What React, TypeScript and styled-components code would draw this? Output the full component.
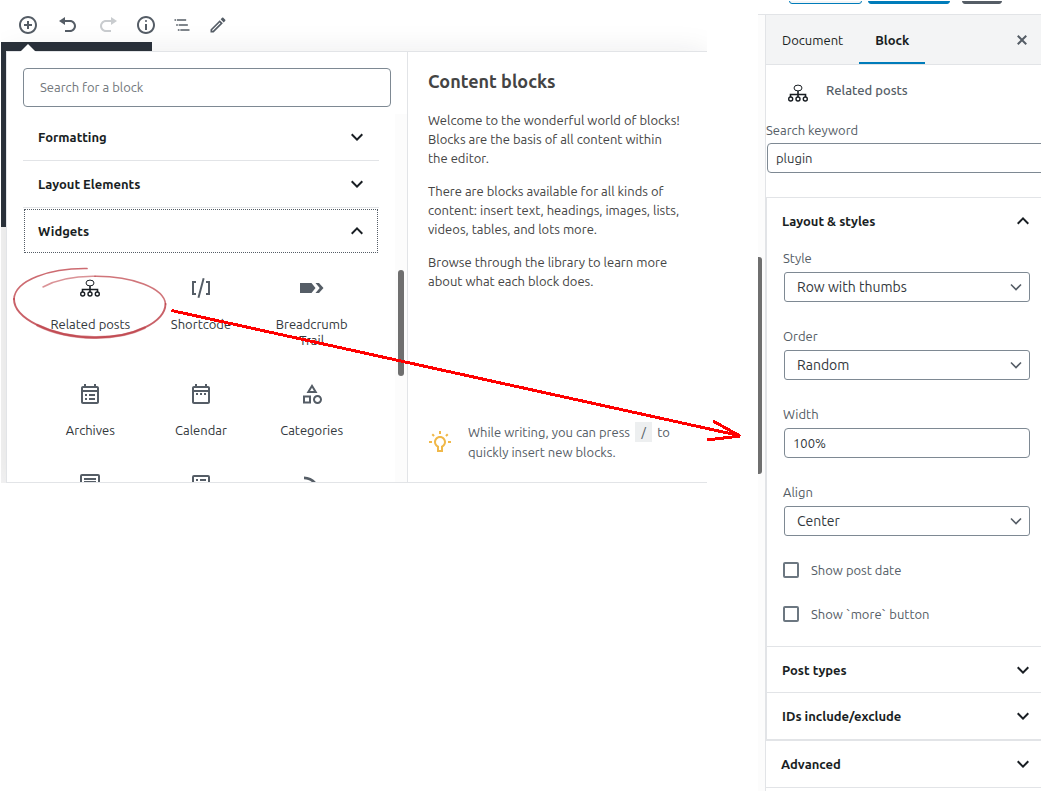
import React, { useState } from 'react';
import styled, { createGlobalStyle } from 'styled-components';

const GlobalStyle = createGlobalStyle`
  *, *::before, *::after { box-sizing: border-box; }
  body {
    margin: 0;
    background: #fff;
    color: #191e23;
    font-family: Ubuntu, "Noto Sans", "Open Sans", sans-serif;
    font-size: 13px;
    line-height: 20px;
  }
  button, input, select { font: inherit; color: inherit; margin: 0; }
  h2, p, ul { margin: 0; padding: 0; }
`;

const line = '#e2e4e7';
const slate = '#555d66';
const fieldBorder = '#7e8993';

const Page = styled.div`
  position: relative;
  display: flex;
  align-items: flex-start;
  gap: 51px;
  padding: 0 5px 0 1px;
`;

const Editor = styled.section`
  flex: 1;
  min-width: 0;
  overflow: hidden;
`;

const Toolbar = styled.div`
  display: flex;
  align-items: center;
  height: 42px;
  padding: 8px 0 0 17px;
`;

const ToolButton = styled.button<{ $gap: number }>`
  display: flex;
  width: 20px;
  height: 20px;
  margin-right: ${(p) => p.$gap}px;
  padding: 0;
  border: 0;
  background: none;
  color: ${slate};
  &:disabled { color: #c9cccf; }
`;

const Canvas = styled.div`
  display: grid;
  background: #f6f6f6;
`;

const AdminMenu = styled.div`
  grid-area: 1 / 1;
  width: 151px;
  height: 185px;
  background: #2b323b;
`;

const Backdrop = styled.div`
  grid-area: 1 / 1;
  background: #fff;
  margin-left: 5px;
`;

const Inserter = styled.div`
  grid-area: 1 / 1;
  position: relative;
  display: flex;
  height: 432px;
  margin: 9px 0 0 5px;
  background: #fff;
  border: 1px solid ${line};
  border-right: 0;
  box-shadow: 0 3px 30px rgba(25, 30, 35, 0.1);
`;

const Pointer = styled.svg`
  position: absolute;
  top: -9px;
  left: 12px;
`;

const BlockPicker = styled.div`
  flex: 0 0 401px;
  display: flex;
  flex-direction: column;
  border-right: 1px solid ${line};
`;

const SearchInput = styled.input`
  height: 39px;
  margin: 16px 16px 7px;
  padding: 0 16px 2px;
  border: 1px solid ${fieldBorder};
  border-radius: 4px;
  background: #fff;
  &::placeholder { color: #72777c; opacity: 1; }
`;

const ScrollArea = styled.div`
  flex: 1;
  min-height: 0;
  display: flex;
  overflow: hidden;
`;

const Categories = styled.div`
  flex: 1;
  min-width: 0;
  padding: 0 16px;
`;

const CategoryButton = styled.button<{ $open?: boolean }>`
  display: flex;
  align-items: center;
  justify-content: space-between;
  width: 100%;
  height: ${(p) => (p.$open ? 46 : 47)}px;
  padding: 0 10px 0 15px;
  border: 0;
  border-bottom: ${(p) => (p.$open ? 0 : 1)}px solid ${line};
  background: none;
  font-weight: 600;
  outline: ${(p) => (p.$open ? '1px dotted #555d66' : 'none')};
  outline-offset: -2px;
`;

const BlockGrid = styled.ul`
  display: grid;
  grid-template-columns: repeat(3, 1fr);
  width: 332px;
  margin-left: 12px;
  list-style: none;
`;

const BlockButton = styled.button`
  display: flex;
  flex-direction: column;
  align-items: center;
  gap: 16px;
  width: 100%;
  padding: 22px 12px 12px;
  border: 0;
  background: none;
  color: #32373c;
  line-height: 16px;
  svg { color: ${slate}; }
`;

const Track = styled.div`
  width: 12px;
  padding: 156px 3px 0 3px;
  background: #fcfcfc;
`;

const Thumb = styled.div<{ $height: number }>`
  height: ${(p) => p.$height}px;
  border-radius: 3px;
  background: #6f6f6f;
`;

const Help = styled.div`
  flex: 1;
  min-width: 0;
  display: flex;
  flex-direction: column;
  padding: 17px 0 20px 20px;
  color: #444;
  line-height: 19px;
  white-space: nowrap;
`;

const HelpTitle = styled.h2`
  margin-bottom: 18px;
  font-size: 18px;
  line-height: 24px;
`;

const HelpText = styled.p`
  margin-bottom: 14px;
`;

const Tip = styled.div`
  display: flex;
  align-items: center;
  gap: 16px;
  margin-top: auto;
  color: ${slate};
  line-height: 20px;
  svg { color: #f0b849; }
`;

const Key = styled.code`
  margin: 0 2px;
  padding: 3px 5px;
  background: #edeff0;
  font-family: "Ubuntu Mono", "Liberation Mono", monospace;
  font-size: 13px;
`;

const Sidebar = styled.aside`
  flex: 0 0 283px;
  margin-top: 1px;
  overflow: hidden;
`;

const TopActions = styled.div`
  display: flex;
  align-items: flex-end;
  height: 14px;
  padding: 0 39px 10px 31px;
  border-bottom: 1px solid ${line};
  overflow: hidden;
`;

const ActionButton = styled.button<{ $width: number; $gap: number; $bg: string; $border: string }>`
  flex: 0 0 ${(p) => p.$width}px;
  height: 33px;
  margin-right: ${(p) => p.$gap}px;
  border: 1px solid ${(p) => p.$border};
  border-radius: 3px;
  background: ${(p) => p.$bg};
`;

const SidebarBody = styled.div`
  display: flex;
`;

const OuterTrack = styled.div`
  width: 7px;
  padding: 242px 3px 0 0;
  background: #fcfcfc;
`;

const OuterThumb = styled(Thumb)`
  border-radius: 0 3px 3px 0;
`;

const Settings = styled.div`
  flex: 1;
  min-width: 0;
  padding-bottom: 3px;
  border-left: 1px solid ${line};
`;

const Tabs = styled.div`
  display: flex;
  height: 50px;
  border-bottom: 1px solid ${line};
  background: #f3f4f5;
`;

const Tab = styled.button<{ $active?: boolean }>`
  padding: 0 16px;
  border: 0;
  border-bottom: 2px solid ${(p) => (p.$active ? '#007cba' : 'transparent')};
  border-top: 2px solid transparent;
  background: none;
  font-weight: ${(p) => (p.$active ? 600 : 400)};
`;

const CloseButton = styled.button`
  display: flex;
  align-items: center;
  margin-left: auto;
  padding: 0 9px;
  border: 0;
  background: none;
  color: ${slate};
`;

const BlockCard = styled.div`
  display: flex;
  gap: 16px;
  padding: 15px 0 0 20px;
  height: 55px;
  color: ${slate};
  font-weight: 500;
  svg { margin-top: 1px; }
`;

const KeywordField = styled.label`
  display: block;
  padding-bottom: 24px;
  color: ${slate};
`;

const TextInput = styled.input`
  display: block;
  height: 30px;
  margin-left: 1px;
  padding: 0 8px;
  border: 1px solid ${fieldBorder};
  border-radius: 4px;
  background: #fff;
  color: #32373c;
`;

const KeywordInput = styled(TextInput)`
  width: calc(100% + 8px);
  margin-top: 3px;
`;

const PanelGroup = styled.div`
  border: 1px solid ${line};
  border-right: 0;
`;

const PanelButton = styled.button`
  display: flex;
  align-items: center;
  justify-content: space-between;
  width: 100%;
  height: 46px;
  padding: 0 6px 0 15px;
  border: 0;
  background: none;
  font-weight: 600;
`;

const Panel = styled.div`
  & + & { border-top: 1px solid ${line}; }
  & + & ${PanelButton} { height: 45px; }
  & + &:last-child ${PanelButton} { height: 46px; }
`;

const AdvancedPanel = styled.div`
  border-top: 1px solid ${line};
  border-bottom: 1px solid ${line};
`;

const Fields = styled.div`
  display: flex;
  flex-direction: column;
  gap: 24px;
  padding: 4px 11px 22px 16px;
`;

const Field = styled.label`
  display: grid;
  gap: 4px;
  color: ${slate};
`;

const SelectBox = styled.span`
  display: grid;
  align-items: center;
  margin-left: 1px;
  svg {
    grid-area: 1 / 1;
    justify-self: end;
    margin-right: 6px;
    pointer-events: none;
  }
`;

const Select = styled.select`
  grid-area: 1 / 1;
  appearance: none;
  height: 30px;
  padding: 0 28px 0 12px;
  border: 1px solid ${fieldBorder};
  border-radius: 3px;
  background: #fff;
  color: #32373c;
  font-size: 14px;
`;

const CheckField = styled.label`
  display: flex;
  align-items: center;
  gap: 12px;
  color: ${slate};
`;

const Checkbox = styled.input`
  appearance: none;
  width: 16px;
  height: 16px;
  border: 2px solid #6c7781;
  border-radius: 2px;
  background: #fff;
  &:checked { background: #11a0d2; border-color: #11a0d2; }
`;

const Annotations = styled.svg`
  position: absolute;
  top: 0;
  left: 0;
  pointer-events: none;
`;

const Glyph = ({ d, size = 24, box = 24 }: { d: string; size?: number; box?: number }) => (
  <svg width={size} height={size} viewBox={`0 0 ${box} ${box}`} fill="currentColor" aria-hidden="true">
    <path d={d} />
  </svg>
);

const UP = 'M12 8l-6 6 1.41 1.41L12 10.83l4.59 4.58L18 14z';
const DOWN = 'M7.41 8.59L12 13.17l4.59-4.58L18 10l-6 6-6-6z';
const FRAME =
  'M21 6v14c0 1.1-.9 2-2 2H5c-1.11 0-2-.9-2-2V6c0-1.1.89-2 2-2h1V2h2v2h8V2h2v2h1c1.1 0 2 .9 2 2zM5 8h14V6H5v2zm14 12V10H5v10h14z';

const tools = [
  { name: 'Add block', box: 20, gap: 20, d: 'M10 1c-5 0-9 4-9 9s4 9 9 9 9-4 9-9-4-9-9-9zm0 16c-3.9 0-7-3.1-7-7s3.1-7 7-7 7 3.1 7 7-3.1 7-7 7zm1-11H9v3H6v2h3v3h2v-3h3V9h-3V6z' },
  { name: 'Undo', box: 20, gap: 20, d: 'M12 5H7V2L1 6l6 4V7h5c2.2 0 4 1.8 4 4s-1.8 4-4 4H7v2h5c3.3 0 6-2.7 6-6s-2.7-6-6-6z' },
  { name: 'Redo', box: 20, gap: 18, disabled: true, d: 'M8 5h5V2l6 4-6 4V7H8c-2.2 0-4 1.8-4 4s1.8 4 4 4h5v2H8c-3.3 0-6-2.7-6-6s2.7-6 6-6z' },
  { name: 'Content structure', box: 20, gap: 16, d: 'M9 15h2V9H9v6zm1-10c-.5 0-1 .5-1 1s.5 1 1 1 1-.5 1-1-.5-1-1-1zm0-4c-5 0-9 4-9 9s4 9 9 9 9-4 9-9-4-9-9-9zm0 16c-3.9 0-7-3.1-7-7s3.1-7 7-7 7 3.1 7 7-3.1 7-7 7z' },
  { name: 'Block navigation', box: 24, gap: 16, d: 'M5 5H3v2h2V5zm3 8h11v-2H8v2zm9-8H6v2h11V5zM7 11H5v2h2v-2zm0 8h2v-2H7v2zm3-2v2h11v-2H10z' },
  { name: 'Tools', box: 24, gap: 0, d: 'M14.060 9.020l.92.92L5.920 19H5v-.92l9.060-9.060M17.660 3c-.25 0-.51.1-.7.29l-1.830 1.830 3.750 3.750 1.830-1.830c.39-.39.39-1.020 0-1.410l-2.340-2.340c-.2-.2-.45-.29-.71-.29zm-3.600 3.190L3 17.250V21h3.750L17.810 9.940l-3.750-3.750z' },
];

const RelatedIcon = () => (
  <svg width="24" height="24" viewBox="0 0 24 24" fill="none" stroke="#191e23" aria-hidden="true">
    <ellipse cx="12" cy="7" rx="4" ry="2.9" strokeWidth="1" />
    <path d="M12 10v6M4.500 16v-2.500h15V16" strokeWidth="1.6" />
    <g strokeWidth="1.4">
      <circle cx="4.700" cy="18" r="2" />
      <circle cx="12" cy="18" r="2" />
      <circle cx="19.300" cy="18" r="2" />
    </g>
  </svg>
);

const blocks: { name: string; icon: React.ReactNode; iconOnly?: boolean }[] = [
  { name: 'Related posts', icon: <RelatedIcon /> },
  { name: 'Shortcode', icon: <Glyph d="M8.500 21.400l1.900.5 5.200-19.300-1.900-.5zM3 19h4v-2H5V7h2V5H3zM17 5v2h2v10h-2v2h4V5z" /> },
  { name: 'Breadcrumb Trail', icon: <Glyph d="M0 7h11.500l4 5-4 5H0zM15.500 7H19l4.500 5-4.500 5h-3.500l4.200-5z" /> },
  { name: 'Archives', icon: <Glyph d={`${FRAME}M7 12h2v2H7zM11 12h6v2h-6zM7 16h2v2H7zM11 16h6v2h-6z`} /> },
  { name: 'Calendar', icon: <Glyph d={`${FRAME}M7 11h2v2H7zM11 11h2v2h-2zM15 11h2v2h-2z`} /> },
  { name: 'Categories', icon: <Glyph d="M12 2l-5.500 9h11L12 2zm0 3.840L13.930 9h-3.870L12 5.840zM17.500 13c-2.490 0-4.500 2.010-4.500 4.500s2.010 4.500 4.500 4.500 4.500-2.010 4.500-4.500-2.010-4.500-4.500-4.500zm0 7c-1.380 0-2.500-1.120-2.500-2.500s1.120-2.500 2.500-2.500 2.500 1.120 2.500 2.500-1.120 2.500-2.500 2.500zM3 21.500h8v-8H3v8zm2-6h4v4H5v-4z" /> },
  { name: 'Latest Comments', iconOnly: true, icon: <Glyph d="M4 2h16a2 2 0 012 2v18l-4-4H4a2 2 0 01-2-2V4a2 2 0 012-2zm0 2v12h16V4zM6 6h12v2H6zM6 9h12v2H6zM6 12h12v2H6z" /> },
  { name: 'Latest Posts', iconOnly: true, icon: <Glyph d="M5 3h14a2 2 0 012 2v14a2 2 0 01-2 2H5a2 2 0 01-2-2V5a2 2 0 012-2zm0 2v14h14V5zM7 7h2v2H7zM11 7h6v2h-6zM7 11h2v2H7zM11 11h6v2h-6z" /> },
  { name: 'RSS', iconOnly: true, icon: <Glyph d="M4 4.440v2.830c7.030 0 12.730 5.700 12.730 12.730h2.830c0-8.590-6.970-15.560-15.560-15.560zm0 5.660v2.830c3.900 0 7.070 3.170 7.070 7.070h2.830c0-5.470-4.430-9.900-9.900-9.900z" /> },
];

const TIP =
  'M20.450 4.910L19.040 3.500l-1.790 1.800 1.410 1.410 1.790-1.800zM13 4h-2V1h2v3zm10 9h-3v-2h3v2zm-12 6.950v-3.960l-1-.58c-1.240-.72-2-2.040-2-3.460 0-2.210 1.790-4 4-4s4 1.790 4 4c0 1.420-.77 2.740-2 3.460l-1 .58v3.960h-2zm-2 2h6v-4.810c1.790-1.040 3-2.970 3-5.190 0-3.310-2.690-6-6-6s-6 2.690-6 6c0 2.220 1.210 4.150 3 5.190v4.810zM4 13H1v-2h3v2zm2.760-7.710l-1.790-1.800L3.560 4.900l1.800 1.790 1.400-1.400z';

const SelectField = ({ label, options }: { label: string; options: string[] }) => (
  <Field>
    {label}
    <SelectBox>
      <Select defaultValue={options[0]}>
        {options.map((o) => (
          <option key={o}>{o}</option>
        ))}
      </Select>
      <svg width="16" height="16" viewBox="0 0 16 16" fill="none" stroke={slate} strokeWidth="1.6" aria-hidden="true">
        <path d="M3 5.500l5 5 5-5" />
      </svg>
    </SelectBox>
  </Field>
);

export default function App() {
  const [keyword, setKeyword] = useState('plugin');
  const [width, setWidth] = useState('100%');

  return (
    <>
      <GlobalStyle />
      <Page>
        <Editor>
          <Toolbar>
            {tools.map((t) => (
              <ToolButton key={t.name} $gap={t.gap} disabled={t.disabled} aria-label={t.name}>
                <Glyph d={t.d} size={20} box={t.box} />
              </ToolButton>
            ))}
          </Toolbar>
          <Canvas>
            <Backdrop />
            <AdminMenu />
            <Inserter>
              <Pointer width="18" height="10" viewBox="0 0 18 10" aria-hidden="true">
                <path d="M0 10L9 1l9 9z" fill="#fff" />
              </Pointer>
              <BlockPicker>
                <SearchInput type="search" placeholder="Search for a block" aria-label="Search for a block" />
                <ScrollArea>
                  <Categories>
                    <CategoryButton>Formatting<Glyph d={DOWN} /></CategoryButton>
                    <CategoryButton>Layout Elements<Glyph d={DOWN} /></CategoryButton>
                    <CategoryButton $open>Widgets<Glyph d={UP} /></CategoryButton>
                    <BlockGrid>
                      {blocks.map((b) => (
                        <li key={b.name}>
                          <BlockButton aria-label={b.name}>
                            {b.icon}
                            {!b.iconOnly && <span>{b.name}</span>}
                          </BlockButton>
                        </li>
                      ))}
                    </BlockGrid>
                  </Categories>
                  <Track><Thumb $height={106} /></Track>
                </ScrollArea>
              </BlockPicker>
              <Help>
                <HelpTitle>Content blocks</HelpTitle>
                <HelpText>
                  Welcome to the wonderful world of blocks!<br />
                  Blocks are the basis of all content within<br />
                  the editor.
                </HelpText>
                <HelpText>
                  There are blocks available for all kinds of<br />
                  content: insert text, headings, images, lists,<br />
                  videos, tables, and lots more.
                </HelpText>
                <HelpText>
                  Browse through the library to learn more<br />
                  about what each block does.
                </HelpText>
                <Tip>
                  <Glyph d={TIP} />
                  <p>
                    While writing, you can press <Key>/</Key> to<br />
                    quickly insert new blocks.
                  </p>
                </Tip>
              </Help>
            </Inserter>
          </Canvas>
        </Editor>

        <Sidebar>
          <TopActions>
            <ActionButton $width={73} $gap={6} $bg="#f3f5f6" $border="#007cba" aria-label="Preview" />
            <ActionButton $width={82} $gap={12} $bg="#007cba" $border="#007cba" aria-label="Publish" />
            <ActionButton $width={40} $gap={0} $bg={slate} $border={slate} aria-label="Settings" />
          </TopActions>
          <SidebarBody>
            <OuterTrack><OuterThumb $height={217} /></OuterTrack>
            <Settings>
              <Tabs>
                <Tab>Document</Tab>
                <Tab $active>Block</Tab>
                <CloseButton aria-label="Close settings">
                  <Glyph size={20} box={20} d="M14.950 6.460L11.410 10l3.540 3.540-1.410 1.410L10 11.420l-3.530 3.530-1.420-1.420L8.580 10 5.050 6.470l1.420-1.420L10 8.580l3.540-3.530z" />
                </CloseButton>
              </Tabs>
              <BlockCard><RelatedIcon />Related posts</BlockCard>
              <KeywordField>
                Search keyword
                <KeywordInput type="text" value={keyword} onChange={(e) => setKeyword(e.target.value)} />
              </KeywordField>
              <PanelGroup>
                <Panel>
                  <PanelButton>Layout &amp; styles<Glyph d={UP} /></PanelButton>
                  <Fields>
                    <SelectField label="Style" options={['Row with thumbs']} />
                    <SelectField label="Order" options={['Random']} />
                    <Field>
                      Width
                      <TextInput type="text" value={width} onChange={(e) => setWidth(e.target.value)} />
                    </Field>
                    <SelectField label="Align" options={['Center']} />
                    <CheckField><Checkbox type="checkbox" />Show post date</CheckField>
                    <CheckField><Checkbox type="checkbox" />Show `more` button</CheckField>
                  </Fields>
                </Panel>
                <Panel><PanelButton>Post types<Glyph d={DOWN} /></PanelButton></Panel>
                <Panel><PanelButton>IDs include/exclude<Glyph d={DOWN} /></PanelButton></Panel>
              </PanelGroup>
              <AdvancedPanel><PanelButton>Advanced<Glyph d={DOWN} /></PanelButton></AdvancedPanel>
            </Settings>
          </SidebarBody>
        </Sidebar>

        <Annotations width="750" height="460" viewBox="0 0 750 460" fill="none" aria-hidden="true">
          <g stroke="#bc3a42" strokeLinecap="round">
            <path d="M87 268.500C50 268 15 280 14 299" strokeWidth="1.7" opacity="0.75" />
            <path d="M14 299C14 318 50 337 94 337.500C134 338 165 322 165.500 304" strokeWidth="1.9" opacity="0.8" />
            <path d="M37.500 325.200C52 332.400 72 337.200 94 337.500C114 337.800 131.800 333.900 144.600 327.700" strokeWidth="2.8" opacity="0.5" />
            <path d="M165.500 304C164 288 132 276 95 276.300" strokeWidth="1.6" opacity="0.7" />
            <path d="M95 276.300C74 276 56 280 43 287" strokeWidth="1.5" opacity="0.55" />
          </g>
          <g stroke="#f00" strokeWidth="3" strokeLinejoin="bevel" shapeRendering="crispEdges">
            <path d="M171.500 310.500L739 435.500" />
            <path d="M713 421L740 436L707 440" />
          </g>
        </Annotations>
      </Page>
    </>
  );
}
